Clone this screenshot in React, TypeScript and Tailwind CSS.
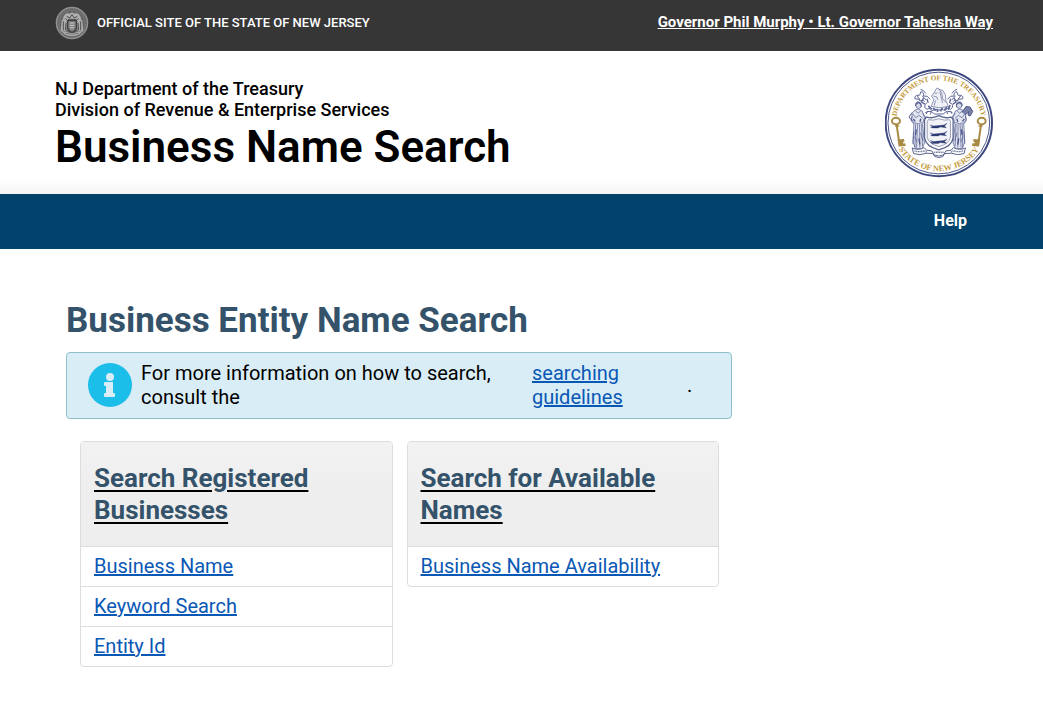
import React from 'react';

type SearchLink = { label: string; href: string };

type CardProps = {
  title: string;
  links: SearchLink[];
};

const registeredLinks: SearchLink[] = [
  { label: 'Business Name', href: '#business-name' },
  { label: 'Keyword Search', href: '#keyword' },
  { label: 'Entity Id', href: '#entity-id' },
];

const availableLinks: SearchLink[] = [
  { label: 'Business Name Availability', href: '#availability' },
];

const StateSeal: React.FC = () => (
  <svg className="size-[34px] shrink-0" viewBox="0 0 102 102" fill="none" aria-hidden="true">
    <circle cx="51" cy="51" r="49" fill="#777777" />
    <circle cx="51" cy="51" r="47" stroke="#969696" strokeWidth="3" />
    <circle cx="51" cy="51" r="42" stroke="#5c5c5c" strokeWidth="3" strokeDasharray="4 3" />
    <circle cx="51" cy="51" r="38" fill="#666666" stroke="#777777" strokeWidth="1" />
    <path d="M24 36q6-18 21-13 6-7 12 0 15-5 21 13l-10 10H34z" fill="#b0b0b0" />
    <path d="M35 31l9 5 7-10 7 10 9-5M39 40h25M31 37l6 6M71 37l-6 6" stroke="#484848" strokeWidth="3" />
    <path d="M17 76l3-32 7-9 8 8-1 33zM85 76l-3-32-7-9-8 8 1 33z" fill="#adadad" />
    <path d="M25 46v27M77 46v27M33 51l-2 22M69 51l2 22" stroke="#505050" strokeWidth="3" />
    <path d="M38 44h26v22q-3 10-13 14-10-4-13-14z" fill="#858585" stroke="#404040" strokeWidth="4" />
    <path d="M44 51h14M44 58h14M45 65h12" stroke="#c4c4c4" strokeWidth="3" />
    <path d="M20 76q17 0 22 5h18q5-5 22-5l-9 9q-22 10-44 0z" fill="#b0b0b0" />
    <path d="M30 81q21 8 42 0" stroke="#5b5b5b" strokeWidth="2" />
  </svg>
);

const Key: React.FC<{ transform?: string }> = ({ transform }) => (
  <g transform={transform} stroke="#a88a45" fill="none">
    <ellipse cx="63" cy="183" rx="12" ry="10" strokeWidth="6" />
    <path d="M65 193l8 57" strokeWidth="6" />
    <path d="M60 198h13" strokeWidth="4" />
    <path d="M68 239l19-2 2 8-5 1 1 5 6-1 1 8-21 2z" fill="#a88a45" stroke="none" />
  </g>
);

const Supporter: React.FC<{ transform?: string }> = ({ transform }) => (
  <g transform={transform} stroke="#4c568b" strokeWidth="2" fill="none">
    <circle cx="131" cy="137" r="8" fill="#d5d8e6" />
    <path d="M122 138q-1-14 10-12 9 2 7 14M124 130q8-7 14 2" strokeWidth="3" />
    <path d="M122 149l-10 9-2 20 7 12-3 57 8 19h20l7-17-6-55 6-22-7-19-12-6z" fill="#e2e5ef" />
    <path d="M114 162l8 11 11-7 10 9M118 188q12 8 24-1M121 151l8 9 9-8" />
    <path d="M122 192l-2 71M128 193l-3 70M134 193l1 70M140 192l3 67M117 215l-3 37" />
    <path d="M112 168l-3 14 7 9M143 159l9 12-3 10M119 230l7 16M137 218l7 25" />
    <path d="M115 177l6 7M138 176l-3 9M124 208l-2 18M132 235l3 19" strokeWidth="4" />
  </g>
);

const TreasurySeal: React.FC = () => (
  <svg
    className="h-[110px] w-[108px] shrink-0"
    viewBox="30 24 325 330"
    role="img"
    aria-label="Department of the Treasury, State of New Jersey"
  >
    <defs>
      <path id="seal-top" d="M63 189a129 129 0 0 1 258 0" />
      <path id="seal-bottom" d="M47 189a145 145 0 0 0 290 0" />
    </defs>
    <circle cx="192" cy="189" r="160" fill="#ffffff" stroke="#3d477f" strokeWidth="6" />
    <circle cx="192" cy="189" r="153" fill="none" stroke="#4d568b" strokeWidth="3" />
    <g fill="#c39a3c" fontSize="22" fontWeight="700" textAnchor="middle" className="font-['Liberation_Serif',serif]">
      <text>
        <textPath href="#seal-top" startOffset="50%">DEPARTMENT OF THE TREASURY</textPath>
      </text>
      <text fontSize="25">
        <textPath href="#seal-bottom" startOffset="50%">STATE OF NEW JERSEY</textPath>
      </text>
    </g>
    <Key />
    <Key transform="translate(384 0) scale(-1 1)" />

    {/* horse head crest with mantling */}
    <g fill="none" stroke="#5a6496" strokeWidth="3">
      <path d="M169 139l8-20-7-11 8-10 6-12 6-2 3 4 11 3 8 14 1 16 8 18q-26 9-52 0z" fill="#f0f1f7" strokeWidth="2" />
      <path d="M192 87l9 12 2 16 10 12M180 100l8-1M176 108l10 3 3 8M195 95l5 20 3 14M182 121l-4 16" strokeWidth="2" />
      <path d="M166 118q-8-14-20-10 2-13-8-13-1 12-11 14 10 9 8 14 10-8 14 2M142 107l11 13M153 100q-8-12-16-12M130 105q-12 1-10 11l14 2" />
      <path d="M218 118q8-14 20-10-2-13 8-13 1 12 11 14-10 9-8 14-10-8-14 2M242 107l-11 13M231 100q8-12 16-12M254 105q12 1 10 11l-14 2" />
      <path d="M156 129q-9 3-6 14 6 9 15 1 6 13 15 3 12 8 22 0 10 9 16-3 10 8 15-2 2-13-8-13" />
      <path d="M160 137l10 10M174 144l9 8M188 146v10M203 144l-6 10M216 141l-7 9M226 135l-6 14" strokeWidth="5" />
      <path d="M151 158q15-10 28 4h26q14-14 28-4M159 153l-5 9M169 154l-2 9M216 154l3 8M227 153l4 8" />
      <path d="M146 114l-6 12 10 6M238 114l6 12-10 6M156 116l4 12M228 116l-4 12" strokeWidth="4" />
    </g>

    <Supporter />
    <Supporter transform="translate(384 0) scale(-1 1)" />
    <path d="M262 157l12-18 12 2 8 13-8 14-6-3 2-10-11 10" fill="#7981a8" stroke="#4c568b" strokeWidth="3" />
    <path d="M111 158l-9 13 10 12" fill="none" stroke="#4c568b" strokeWidth="3" />

    {/* shield with three plows */}
    <path d="M156 171q16 6 36-4 20 10 36 4 9 6 7 17v46q-4 26-43 36-39-10-43-36v-46q-2-11 7-17z" fill="#ffffff" stroke="#59648e" strokeWidth="4" />
    <path d="M160 179q16 4 32-3 17 7 32 3 4 4 3 12v41q-4 20-35 28-31-8-35-28v-41q-1-8 3-12z" fill="#f2f3f8" stroke="#66709a" strokeWidth="2" />
    <g fill="#2d3974" stroke="#2d3974">
      <path id="plow" d="M166 195l10 3 31-3 10-5-8 8 6 5-19-2-6 3h-18l-5-3 7-1z" />
      <use href="#plow" y="24" />
      <use href="#plow" y="47" />
    </g>

    <path d="M112 264q18 9 36-1l7 8 16 2 7 12q14 7 28 0l7-12 16-2 7-8q18 10 36 1l-4 17q-19 7-38-1l-20 1-6 9q-12 6-24 0l-6-9-20-1q-19 8-38 1z" fill="#ffffff" stroke="#59648e" strokeWidth="3" />
    <path d="M119 273q15 5 29-1l7 5M265 273q-15 5-29-1l-7 5M178 277h28" fill="none" stroke="#59648e" strokeWidth="4" strokeDasharray="3 2" />
  </svg>
);

const InfoIcon: React.FC = () => (
  <svg className="size-11 shrink-0" viewBox="0 0 44 44" aria-hidden="true">
    <circle cx="22" cy="22" r="22" fill="#1bbde9" />
    <circle cx="22" cy="14" r="4" fill="#d9edf7" />
    <path d="M17 19h8v11h1q1 0 1 1v2q0 1-1 1h-9q-1 0-1-1v-2q0-1 1-1h1v-7h-1q-1 0-1-1v-2q0-1 1-1z" fill="#d9edf7" />
  </svg>
);

const SearchCard: React.FC<CardProps> = ({ title, links }) => (
  <section className="overflow-hidden rounded border border-[#dddddd]">
    <div className="bg-linear-to-b from-[#f2f2f2] to-[#eeeeee] to-50% px-[13px] py-5">
      <h3 className="text-[26px] leading-8 font-bold text-[#34536b] underline decoration-black decoration-2 underline-offset-3">
        {title}
      </h3>
    </div>
    <ul>
      {links.map((link) => (
        <li key={link.label} className="border-t border-[#dddddd] px-[13px] pt-[7px] pb-2 leading-6">
          <a href={link.href} className="text-[#0a58b5] underline">
            {link.label}
          </a>
        </li>
      ))}
    </ul>
  </section>
);

const App: React.FC = () => {
  return (
    <div className="bg-white font-[Roboto,sans-serif] text-xl leading-6 text-black">
      <div className="flex h-[51px] items-start justify-between bg-[#363636] pt-[6px] pr-[50px] pl-[55px] text-white">
        <div className="flex items-center gap-2">
          <StateSeal />
          <span className="text-[13px] leading-5 font-medium">OFFICIAL SITE OF THE STATE OF NEW JERSEY</span>
        </div>
        <a href="#governor" className="pt-[6px] text-[15px] leading-5 font-bold underline">
          Governor Phil Murphy • Lt. Governor Tahesha Way
        </a>
      </div>

      <header className="flex items-start justify-between bg-linear-to-b from-white from-90% to-[#f3f3f3] pt-[17px] pr-[50px] pb-4 pl-[55px]">
        <div className="pt-[10px]">
          <p className="text-lg leading-[21px] font-medium">NJ Department of the Treasury</p>
          <p className="text-lg leading-[21px] font-medium">Division of Revenue &amp; Enterprise Services</p>
          <h1 className="text-[44px] leading-[54px] font-semibold">Business Name Search</h1>
        </div>
        <TreasurySeal />
      </header>

      <nav className="flex h-[55px] items-center justify-end bg-[#00426b] px-[76px]">
        <a href="#help" className="pb-px text-base font-bold text-white">
          Help
        </a>
      </nav>

      <main className="ml-[66px] max-w-[666px] pt-[50px]">
        <h2 className="text-[35px] leading-[44px] font-bold text-[#34536b]">Business Entity Name Search</h2>

        <div className="mt-[9px] flex items-center gap-[9px] rounded border border-[#8fc1cb] bg-[#d9edf7] pt-2 pr-3 pb-[9px] pl-[21px]">
          <InfoIcon />
          <div className="grid grow grid-cols-[391fr_155fr_32fr] items-center">
            <p>For more information on how to search, consult the</p>
            <a href="#guidelines" className="text-[#0a58b5] underline">
              searching guidelines
            </a>
            <span>.</span>
          </div>
        </div>

        <div className="mt-[22px] grid grid-cols-2 items-start gap-[14px] pr-[13px] pl-[14px]">
          <SearchCard title="Search Registered Businesses" links={registeredLinks} />
          <SearchCard title="Search for Available Names" links={availableLinks} />
        </div>
      </main>
    </div>
  );
};

export default App;
